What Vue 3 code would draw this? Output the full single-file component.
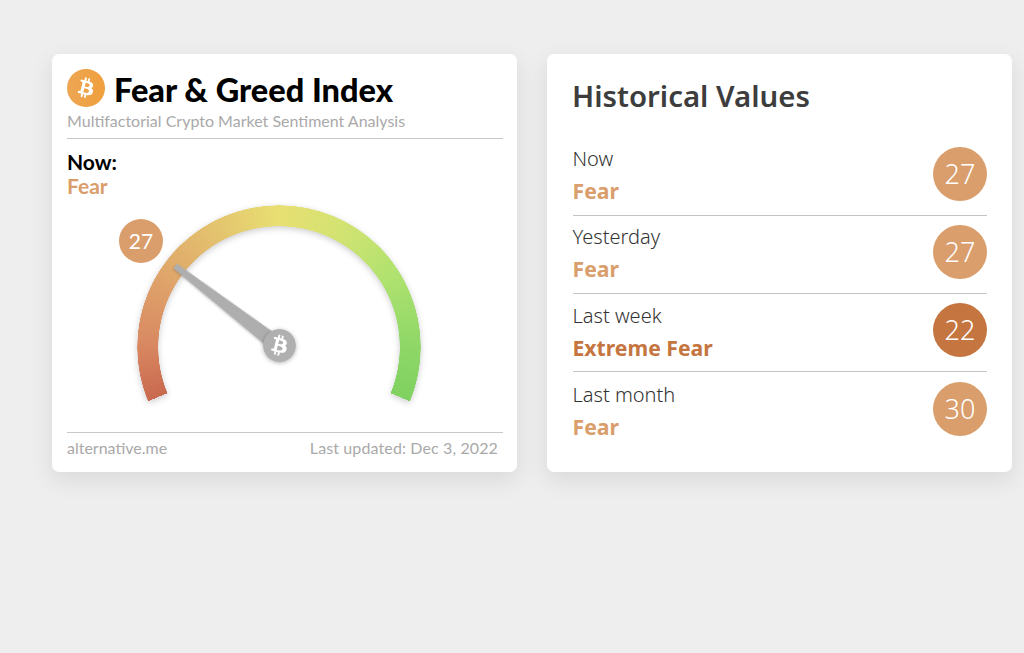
<script setup>
const btc = "M46.1 27.4c.6-4.3-2.6-6.6-7.1-8.1l1.5-5.9-3.6-.9-1.4 5.7c-.9-.2-1.9-.5-2.9-.7l1.4-5.8-3.6-.9-1.5 5.9c-.8-.2-1.5-.3-2.2-.5l-4.9-1.2-.9 3.8s2.6.6 2.6.6c1.4.4 1.7 1.3 1.6 2.1l-1.6 6.5-2.3 9.1c-.2.4-.6 1.1-1.6.8 0 .1-2.6-.7-2.6-.7l-1.8 4.1 4.7 1.2c.9.2 1.7.4 2.6.7l-1.5 6 3.6.9 1.5-5.9c1 .3 1.9.5 2.9.7l-1.5 5.9 3.6.9 1.5-6c6.2 1.2 10.8.7 12.8-4.9 1.6-4.5-.1-7.1-3.3-8.8 2.3-.5 4.1-2.1 4.6-5.3zM37.8 39c-1.1 4.5-8.7 2.1-11.1 1.5l2-8c2.5.6 10.3 1.8 9.1 6.5zm1.1-11.7c-1 4.1-7.3 2-9.3 1.5l1.8-7.2c2 .5 8.6 1.4 7.5 5.7z"
const rows = [
  { label: 'Now', state: 'Fear', value: 27, color: '#d99e6b' },
  { label: 'Yesterday', state: 'Fear', value: 27, color: '#d99e6b' },
  { label: 'Last week', state: 'Extreme Fear', value: 22, color: '#c47540' },
  { label: 'Last month', state: 'Fear', value: 30, color: '#d99e6b' },
]
</script>

<template>
  <div class="page">
    <section class="card index">
      <header class="brand">
        <svg class="logo" viewBox="0 0 64 64" aria-hidden="true">
          <defs>
            <linearGradient id="coin" x1="0" y1="0" x2="1" y2="0">
              <stop offset="0" stop-color="#eda653" />
              <stop offset="1" stop-color="#f09f3d" />
            </linearGradient>
          </defs>
          <circle cx="32" cy="32" r="32" fill="url(#coin)" />
          <path :d="btc" fill="#fff" fill-rule="evenodd" transform="translate(32 32) scale(.85) translate(-32 -32)" />
        </svg>
        <h1>Fear &amp; Greed Index</h1>
      </header>
      <p class="sub">Multifactorial Crypto Market Sentiment Analysis</p>
      <div class="now">Now:</div>
      <div class="now-state">Fear</div>
      <div class="gauge">
        <div class="arc-shadow"><div class="arc"></div></div>
        <div class="pin">27</div>
        <div class="needle-shadow"><div class="needle"></div></div>
        <svg class="hub" viewBox="0 0 64 64" aria-hidden="true">
          <circle cx="32" cy="32" r="32" fill="#b0b0b0" />
          <path :d="btc" fill="#fff" fill-rule="evenodd" />
        </svg>
      </div>
      <footer class="foot">
        <span>alternative.me</span>
        <span class="updated">Last updated: Dec 3, 2022</span>
      </footer>
    </section>

    <section class="card history">
      <h2>Historical Values</h2>
      <div v-for="r in rows" :key="r.label" class="row">
        <div class="texts">
          <div class="label">{{ r.label }}</div>
          <div class="state" :style="{ color: r.color }">{{ r.state }}</div>
        </div>
        <div class="badge" :style="{ background: r.color }">{{ r.value }}</div>
      </div>
    </section>
  </div>
</template>

<style>
html, body { margin: 0; background: #eeeeee; }
</style>

<style scoped>
.page {
  display: flex;
  gap: 30px;
  padding: 54px 12px 0 52px;
  height: 599px;
  background: #eeeeee;
  align-items: flex-start;
}
.card {
  width: 465px;
  height: 418px;
  box-sizing: border-box;
  background: #fff;
  border-radius: 7px;
  box-shadow: 0 8px 24px rgba(0, 0, 0, 0.09);
  display: flex;
  flex-direction: column;
}
.index {
  padding: 15px 14px 0 15px;
  font-family: Lato, sans-serif;
}
.brand { display: flex; align-items: center; gap: 9px; height: 38px; }
.logo { width: 38px; height: 38px; flex: none; }
h1 {
  margin: 0;
  padding-top: 3px;
  font-size: 32.5px;
  font-weight: 900;
  color: #000;
  line-height: 38px;
  white-space: nowrap;
}
.sub {
  margin: 4px 0 0;
  padding-bottom: 7px;
  font-size: 16px;
  line-height: 20px;
  color: #a9a9a9;
  border-bottom: 1px solid #c8c8c8;
  white-space: nowrap;
}
.now {
  margin-top: 11px;
  font-size: 21px;
  font-weight: 700;
  line-height: 24px;
  color: #000;
}
.now-state {
  font-size: 21px;
  font-weight: 700;
  line-height: 24px;
  color: #d99e6b;
}
.gauge { position: relative; flex: 1; }
.arc-shadow {
  position: absolute;
  left: 70px;
  top: 7px;
  width: 284px;
  height: 284px;
  filter: drop-shadow(0 2px 3px rgba(0, 0, 0, 0.2));
}
.arc {
  width: 100%;
  height: 100%;
  border-radius: 50%;
  background: conic-gradient(
    from 247.5deg,
    #c9694f 0deg,
    #d98a62 25deg,
    #de9f69 48deg,
    #e3bf6e 80deg,
    #e8df72 112deg,
    #d3e372 140deg,
    #b0e26f 170deg,
    #90d868 200deg,
    #7fd160 225deg,
    transparent 225deg
  );
  -webkit-mask: radial-gradient(closest-side, transparent 120.5px, #000 121px, #000 141.5px, transparent 142px);
  mask: radial-gradient(closest-side, transparent 120.5px, #000 121px, #000 141.5px, transparent 142px);
}
.pin {
  position: absolute;
  left: 52px;
  top: 21px;
  width: 44px;
  height: 44px;
  border-radius: 50%;
  background: #d99e6b;
  color: #fff;
  font-size: 21px;
  line-height: 44px;
  text-align: center;
}
.needle-shadow {
  position: absolute;
  left: 81px;
  top: 140px;
  width: 131px;
  height: 16px;
  transform-origin: 100% 50%;
  transform: rotate(37.6deg);
  filter: drop-shadow(0 1px 1px rgba(0, 0, 0, 0.2));
}
.needle {
  width: 100%;
  height: 100%;
  background: #aeaeae;
  clip-path: polygon(0 5px, 100% 0, 100% 100%, 0 11px);
}
.hub {
  position: absolute;
  left: 195.5px;
  top: 131px;
  width: 33px;
  height: 33px;
  border-radius: 50%;
  filter: drop-shadow(0 1px 2px rgba(0, 0, 0, 0.3));
}
.foot {
  margin-bottom: 14px;
  padding: 5px 5px 0 0;
  display: flex;
  justify-content: space-between;
  font-size: 16px;
  line-height: 20px;
  color: #a9a9a9;
  border-top: 1px solid #c8c8c8;
}
.updated { letter-spacing: 0.12px; }
.history {
  padding: 22px 25px 0 26px;
  font-family: "Noto Sans", sans-serif;
}
h2 {
  margin: 0 0 21.5px -1px;
  font-size: 29.4px;
  font-weight: 600;
  line-height: 40px;
  color: #3d3d3d;
}
.row {
  height: 78.3px;
  padding-bottom: 5px;
  box-sizing: border-box;
  border-bottom: 1px solid #c4c4c4;
  display: flex;
  align-items: center;
  justify-content: space-between;
}
.row:last-child { border-bottom: 0; }
.texts { padding-top: 3px; }
.label { font-size: 20px; font-weight: 300; line-height: 32px; color: #333; margin-left: -0.5px; }
.state { font-size: 21.2px; font-weight: 700; line-height: 32px; margin-left: -0.5px; }
.badge {
  width: 54px;
  height: 54px;
  border-radius: 50%;
  color: #fff;
  font-size: 27px;
  font-weight: 300;
  line-height: 54px;
  text-align: center;
}
</style>
